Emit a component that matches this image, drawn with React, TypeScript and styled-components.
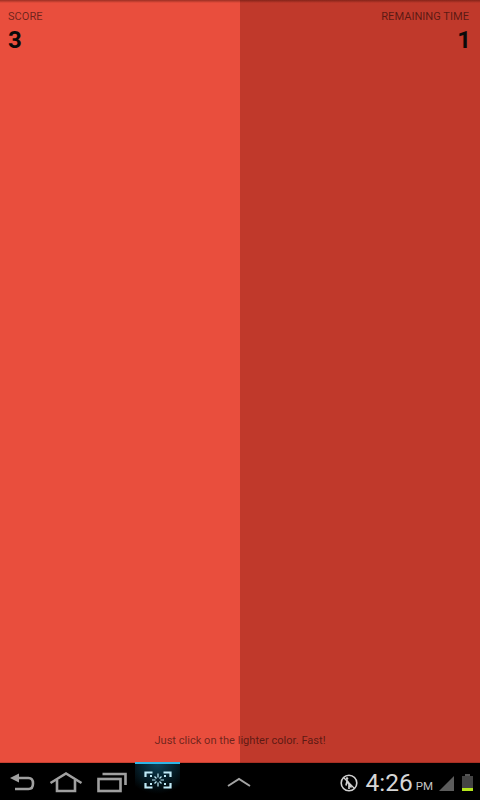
import React from 'react'
import styled, { createGlobalStyle } from 'styled-components'

const GlobalStyle = createGlobalStyle`
  html, body {
    margin: 0;
    padding: 0;
    background: #000;
  }
`

const Screen = styled.div`
  width: 480px;
  height: 800px;
  display: flex;
  flex-direction: column;
  overflow: hidden;
  font-family: Roboto, "Liberation Sans", sans-serif;
`

const Board = styled.div`
  position: relative;
  flex: 1;
  display: flex;
  &:before {
    content: "";
    position: absolute;
    top: 0;
    left: 0;
    right: 0;
    height: 3px;
    background: linear-gradient(rgba(60, 10, 5, 0.45), rgba(60, 10, 5, 0));
  }
  &:after {
    content: "";
    position: absolute;
    bottom: 0;
    left: 0;
    right: 0;
    height: 1px;
    background: rgba(60, 10, 5, 0.2);
  }
`

const Tile = styled.div<{ $dark?: boolean }>`
  flex: 1;
  background: ${(p) => (p.$dark ? '#c0392b' : '#e94e3d')};
`

const Hud = styled.div`
  position: absolute;
  top: 10px;
  left: 8px;
  right: 11px;
  display: flex;
  justify-content: space-between;
`

const Stat = styled.div<{ $right?: boolean }>`
  display: flex;
  flex-direction: column;
  align-items: ${(p) => (p.$right ? 'flex-end' : 'flex-start')};
`

const StatLabel = styled.div`
  font-size: 11.1px;
  line-height: 13px;
  color: rgba(0, 0, 0, 0.55);
`

const StatValue = styled.div<{ $right?: boolean }>`
  margin-top: 3px;
  margin-right: ${(p) => (p.$right ? '-2px' : '0')};
  font-size: 24px;
  line-height: 28px;
  font-weight: 700;
  color: #0a0a0a;
`

const Hint = styled.div`
  position: absolute;
  left: 0;
  right: 0;
  bottom: 16px;
  text-align: center;
  font-size: 11.1px;
  line-height: 13px;
  color: rgba(0, 0, 0, 0.55);
`

const NavBar = styled.div`
  height: 37px;
  flex: none;
  box-sizing: border-box;
  padding-top: 1px;
  background: #000;
  display: flex;
  align-items: center;
`

const NavButtons = styled.div`
  display: flex;
  align-items: center;
  padding-left: 9px;
  gap: 14px;
`

const NavIcon = styled.svg`
  display: block;
  fill: none;
  stroke: #a0a0a0;
  stroke-width: 2.6;
`

const CaptureTab = styled.div`
  position: relative;
  z-index: 1;
  width: 45px;
  height: 38px;
  margin: -2px 0 0 8px;
  padding-bottom: 4px;
  display: flex;
  align-items: center;
  justify-content: center;
  border-top: 2px solid #2fb5e6;
  box-sizing: border-box;
  background: radial-gradient(ellipse 34px 30px at 50% 0, #0c4259 0%, #000 100%);
`

const CaptureIcon = styled.svg`
  display: block;
  fill: none;
  stroke: #bfeaf7;
  stroke-width: 2.2;
`

const MenuChevron = styled.svg`
  display: block;
  margin-left: 47px;
  fill: none;
  stroke: #a4a4a4;
  stroke-width: 2;
`

const Tray = styled.div`
  margin-left: auto;
  padding: 2px 7px 0 0;
  display: flex;
  align-items: center;
`

const Clock = styled.span`
  margin-left: 7px;
  font-size: 24.5px;
  line-height: 28px;
  color: #d6d6d6;
  font-weight: 400;
`

const Meridiem = styled.span`
  margin-left: 3px;
  margin-top: 5px;
  font-size: 11.5px;
  color: #c4c4c4;
`

const Signal = styled.svg`
  display: block;
  margin-left: 6px;
  fill: #5c5c5c;
`

const Battery = styled.svg`
  display: block;
  margin-left: 8px;
`

export default function App() {
  return (
    <Screen>
      <GlobalStyle />
      <Board>
        <Tile />
        <Tile $dark />
        <Hud>
          <Stat>
            <StatLabel>SCORE</StatLabel>
            <StatValue>3</StatValue>
          </Stat>
          <Stat $right>
            <StatLabel>REMAINING TIME</StatLabel>
            <StatValue $right>1</StatValue>
          </Stat>
        </Hud>
        <Hint>Just click on the lighter color. Fast!</Hint>
      </Board>
      <NavBar>
        <NavButtons>
          <NavIcon width="26" height="22" viewBox="0 0 26 22">
            <path d="M6 7h13.5c3 0 4.5 2.2 4.5 5.5s-1.5 5.5-4.5 5.5H6" />
            <path d="M1 7 10 2.5v9z" fill="#a0a0a0" stroke="none" />
          </NavIcon>
          <NavIcon width="34" height="22" viewBox="0 0 34 22">
            <path d="M1.5 12 17 2.5 32.5 12" />
            <path d="M8 9v11h18V9" />
          </NavIcon>
          <NavIcon width="30" height="22" viewBox="0 0 30 22">
            <rect x="1.5" y="8" width="22" height="12" />
            <path d="M5.5 3h23v11" />
          </NavIcon>
        </NavButtons>
        <CaptureTab>
          <CaptureIcon width="28" height="20" viewBox="0 0 28 20">
            <path d="M1.5 7V2.5h7M19.5 2.5h7V7M26.5 13v4.5h-7M8.5 17.5h-7V13" />
            <path d="M6 6h2M20 6h2M6 14h2M20 14h2" strokeWidth="2" />
            <path d="M14 3.5v4M14 12.5v4M8 10h3.5M16.5 10H20M10.5 6.5l2 2M17.5 6.5l-2 2M10.5 13.5l2-2M17.5 13.5l-2-2" strokeWidth="1.2" />
          </CaptureIcon>
        </CaptureTab>
        <MenuChevron width="24" height="10" viewBox="0 0 24 10">
          <path d="M1 9 12 2l11 7" />
        </MenuChevron>
        <Tray>
          <svg width="18" height="18" viewBox="0 0 18 18" fill="none" stroke="#d0d0d0">
            <circle cx="9" cy="9" r="7.8" strokeWidth="1.6" />
            <path d="M3.5 3.5l11 11" strokeWidth="1.2" />
            <circle cx="7" cy="4.6" r="1.3" fill="#d0d0d0" stroke="none" />
            <path d="M7 6.5l2 3.5v5M7 7.5l-1 4M9 10l2.5 3.5" strokeWidth="1.7" />
          </svg>
          <Clock>4:26</Clock>
          <Meridiem>PM</Meridiem>
          <Signal width="15" height="15" viewBox="0 0 15 15">
            <path d="M15 0v15H0z" />
          </Signal>
          <Battery width="11" height="18" viewBox="0 0 11 18">
            <rect x="3" y="0" width="5" height="2" fill="#555" />
            <rect x="0" y="2" width="11" height="12" fill="#444" />
            <rect x="0" y="14" width="11" height="3" fill="#b5e61d" />
          </Battery>
        </Tray>
      </NavBar>
    </Screen>
  )
}
